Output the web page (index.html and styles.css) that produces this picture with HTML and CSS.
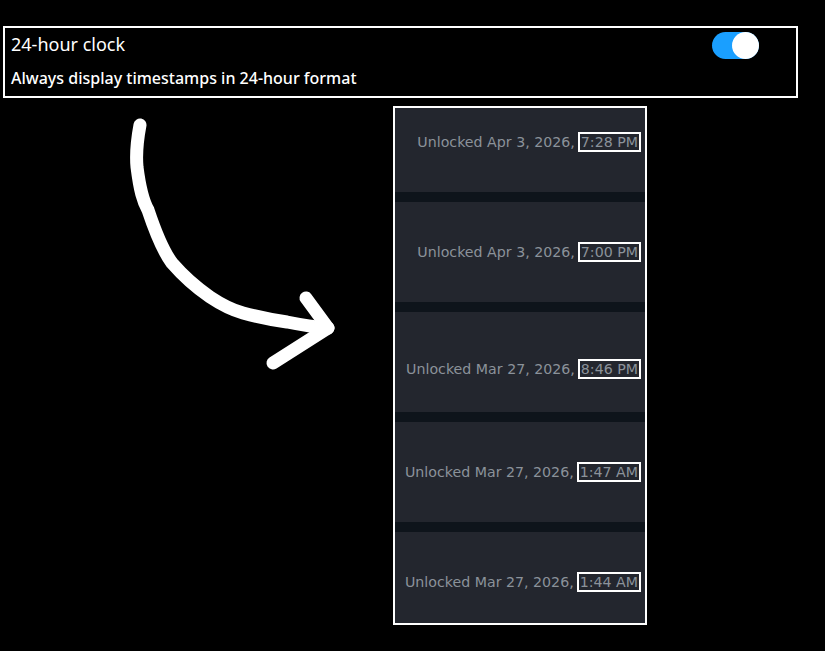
FILE: index.html
```html
<!DOCTYPE html>
<html lang="en">
  <head>
    <meta charset="UTF-8" />
    <meta name="viewport" content="width=device-width, initial-scale=1.0" />
    <title>24-hour clock</title>
    <link rel="stylesheet" href="styles.css">
  </head>

  <body>
    <div class="setting">
      <div class="setting-head">
        <span class="setting-title">24-hour clock</span>
        <div class="toggle on"><div class="knob"></div></div>
      </div>
      <div class="setting-desc">Always display timestamps in 24-hour format</div>
    </div>

    <div class="stage">
      <svg class="arrow" width="390" height="519" viewBox="0 0 390 519">
        <path d="M140 19 C137 35 136 50 137 61 C140 85 143 95 148 104 C156 128 163 145 172 157 C185 172 197 182 210 191 C222 199 232 204 243 207 C258 211 272 214 287 216 C302 219 315 221 328 222"
              fill="none" stroke="#fff" stroke-width="13" stroke-linecap="round" stroke-linejoin="round" />
        <path d="M306 192 L328 222 L273 257" fill="none" stroke="#fff" stroke-width="13" stroke-linecap="round" stroke-linejoin="round" />
      </svg>

      <div class="panel">
        <div class="rows">
          <div class="row"><span class="stamp">Unlocked Apr 3, 2026,<span class="time">7:28 PM</span></span></div>
          <div class="row"><span class="stamp">Unlocked Apr 3, 2026,<span class="time">7:00 PM</span></span></div>
          <div class="row low"><span class="stamp">Unlocked Mar 27, 2026,<span class="time">8:46 PM</span></span></div>
          <div class="row"><span class="stamp">Unlocked Mar 27, 2026,<span class="time">1:47 AM</span></span></div>
          <div class="row"><span class="stamp">Unlocked Mar 27, 2026,<span class="time">1:44 AM</span></span></div>
        </div>
      </div>
    </div>
  </body>
</html>
```

FILE: styles.css
```css
body {
  margin: 0;
  padding: 0;
  background-color: #000;
  color: #fff;
  font-family: "Noto Sans", "Open Sans", sans-serif;
}

.setting {
  margin: 26px 27px 0 3px;
  padding: 4px 37px 6px 6px;
  border: 2px solid #fff;
}

.setting-head {
  display: flex;
  justify-content: space-between;
  align-items: center;
}

.setting-title {
  margin-top: -3px;
  font-size: 18px;
  font-weight: 400;
}

.toggle {
  width: 47px;
  height: 27px;
  border-radius: 14px;
  background-color: #1a9fff;
  display: flex;
  justify-content: flex-end;
}

.knob {
  width: 27px;
  height: 27px;
  border-radius: 50%;
  background-color: #fff;
}

.setting-desc {
  margin-top: 7px;
  font-size: 16px;
  font-weight: 500;
  line-height: 24px;
}

.stage {
  display: flex;
  margin-top: 8px;
}

.arrow {
  flex: none;
  display: block;
}

.panel {
  width: 250px;
  height: 515px;
  margin-left: 3px;
  border: 2px solid #fff;
  background-color: #0e141b;
  overflow: hidden;
}

.rows {
  display: flex;
  flex-direction: column;
  gap: 10px;
  margin-top: -16px;
}

.row {
  height: 100px;
  flex: none;
  background-color: #23262e;
  display: flex;
  align-items: center;
  justify-content: flex-end;
  padding-right: 4px;
  box-sizing: border-box;
}

.row.low {
  padding-top: 14px;
}

.stamp {
  font-family: "DejaVu Sans", sans-serif;
  font-size: 14.2px;
  color: #8b929a;
  white-space: nowrap;
}

.time {
  margin-left: 3px;
  border: 2px solid #fff;
  padding: 0 1px;
}
```
